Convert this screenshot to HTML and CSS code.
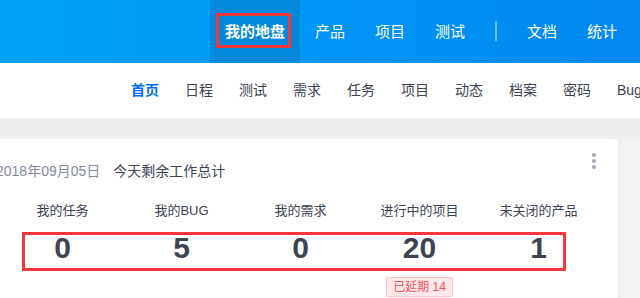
FILE: index.html
```html
<!DOCTYPE html>
<html lang="zh-CN">
<head>
    <meta charset="UTF-8">
    <meta name="viewport" content="width=device-width, initial-scale=1.0">
    <title>我的地盘 - 首页</title>
    <link rel="stylesheet" href="styles.css">
</head>
<body>

    <header class="topbar">
        <ul class="main-nav">
            <li class="active">
                <a href="#">我的地盘</a>
                <span class="mark-box"></span>
            </li>
            <li><a href="#">产品</a></li>
            <li><a href="#">项目</a></li>
            <li><a href="#">测试</a></li>
            <li class="divider"></li>
            <li><a href="#">文档</a></li>
            <li><a href="#">统计</a></li>
        </ul>
    </header>

    <nav class="subbar">
        <ul class="sub-nav">
            <li class="active"><a href="#">首页</a></li>
            <li><a href="#">日程</a></li>
            <li><a href="#">测试</a></li>
            <li><a href="#">需求</a></li>
            <li><a href="#">任务</a></li>
            <li><a href="#">项目</a></li>
            <li><a href="#">动态</a></li>
            <li><a href="#">档案</a></li>
            <li><a href="#">密码</a></li>
            <li><a href="#">Bug</a></li>
        </ul>
    </nav>

    <main class="content">
        <section class="panel">
            <div class="panel-heading">
                <span class="date">2018年09月05日</span>
                <span class="title">今天剩余工作总计</span>
                <button class="more" title="更多"><i></i><i></i><i></i></button>
            </div>
            <div class="stats">
                <div class="stat">
                    <div class="label">我的任务</div>
                    <div class="value">0</div>
                </div>
                <div class="stat">
                    <div class="label">我的BUG</div>
                    <div class="value">5</div>
                </div>
                <div class="stat">
                    <div class="label">我的需求</div>
                    <div class="value">0</div>
                </div>
                <div class="stat">
                    <div class="label">进行中的项目</div>
                    <div class="value">20</div>
                    <span class="delay">已延期 14</span>
                </div>
                <div class="stat">
                    <div class="label">未关闭的产品</div>
                    <div class="value">1</div>
                </div>
            </div>
            <span class="mark-row"></span>
        </section>
        <aside class="side"></aside>
    </main>

</body>
</html>
```

FILE: styles.css
```css
body {
    margin: 0;
    width: 640px;
    height: 298px;
    overflow: hidden;
    background-color: #efefef;
    font-family: "Liberation Sans", "Noto Sans CJK SC", sans-serif;
    color: #3c4353;
}
ul {
    list-style: none;
    margin: 0;
    padding: 0;
}
a {
    color: inherit;
    text-decoration: none;
}

/* top bar */
.topbar {
    height: 63px;
    background: linear-gradient(to right, #00a3fa, #0088f0);
    padding-left: 210px;
}
.main-nav {
    display: flex;
    height: 63px;
    white-space: nowrap;
}
.main-nav li {
    position: relative;
    padding: 0 15px;
    line-height: 63px;
    font-size: 15px;
    color: #fff;
}
.main-nav li.active {
    background-color: #0389da;
    font-weight: bold;
}
.main-nav .divider {
    width: 2px;
    padding: 0;
    margin: 21px 15px 0;
    height: 20px;
    background-color: rgba(255, 255, 255, 0.4);
}
.mark-box {
    position: absolute;
    left: 6px;
    top: 13px;
    width: 69px;
    height: 29px;
    border: 3px solid #f5363b;
}

/* second bar */
.subbar {
    height: 55px;
    background-color: #fff;
    padding-left: 118px;
    overflow: hidden;
}
.sub-nav {
    display: flex;
    white-space: nowrap;
}
.sub-nav li {
    padding: 0 13px;
    line-height: 55px;
    font-size: 14px;
    color: #3c4353;
}
.sub-nav li.active {
    color: #006af1;
    font-weight: bold;
}

/* content */
.content {
    display: flex;
    align-items: flex-start;
    padding-top: 21px;
    margin-left: -16px;
}
.panel {
    position: relative;
    width: 634px;
    height: 160px;
    background-color: #fff;
    border-radius: 4px;
    flex-shrink: 0;
}
.panel-heading {
    display: flex;
    align-items: center;
    height: 62px;
    padding: 0 22px 0 12px;
    font-size: 14px;
}
.panel-heading .date {
    color: #838a9d;
    margin-right: 13px;
}
.panel-heading .title {
    color: #3c4353;
}
.more {
    margin-left: auto;
    align-self: flex-start;
    margin-top: 14px;
    padding: 0;
    border: 0;
    background: none;
    display: flex;
    flex-direction: column;
    gap: 2px;
}
.more i {
    display: block;
    width: 4px;
    height: 4px;
    border-radius: 50%;
    background-color: #a3a8b5;
}

.stats {
    display: grid;
    grid-template-columns: repeat(5, 119px);
    padding-left: 19px;
}
.stat {
    display: flex;
    flex-direction: column;
    align-items: center;
}
.stat .label {
    font-size: 13px;
    line-height: 20px;
}
.stat .value {
    font-size: 30px;
    font-weight: bold;
    line-height: 36px;
    margin-top: 9px;
    color: #3c4353;
}
.delay {
    margin-top: 11px;
    padding: 0 6px;
    line-height: 18px;
    font-size: 12px;
    color: #f2545b;
    background-color: #ffe8e9;
    border: 1px solid #ffc2c4;
    border-radius: 2px;
}
.mark-row {
    position: absolute;
    left: 38px;
    top: 93px;
    width: 538px;
    height: 33px;
    border: 3px solid #f5363b;
}

.side {
    width: 19px;
    height: 160px;
    margin-left: 3px;
    background-color: #f4f4f4;
    border-top-left-radius: 4px;
}
```
